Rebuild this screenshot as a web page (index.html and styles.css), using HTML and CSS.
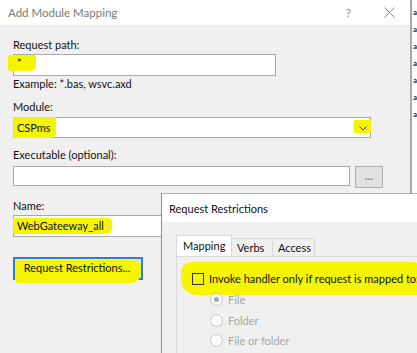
FILE: index.html
```html
<!DOCTYPE html>
<html lang="en">
<head>
  <meta charset="UTF-8">
  <meta name="viewport" content="width=device-width, initial-scale=1.0">
  <title>Add Module Mapping</title>
  <link rel="stylesheet" href="styles.css">
</head>
<body>

  <div class="screen">
    <div class="dialog main">
      <div class="titlebar">
        <span class="title">Add Module Mapping</span>
        <span class="help">?</span>
        <svg class="close" width="11" height="11" viewBox="0 0 11 11">
          <path d="M0.5 0.5 L10.5 10.5 M10.5 0.5 L0.5 10.5" stroke="#8a8a8a" stroke-width="1" fill="none"/>
        </svg>
      </div>

      <div class="form">
        <div class="label">Request path:</div>
        <div class="field path"><span class="mark mark-star">*</span></div>
        <div class="hint">Example: *.bas, wsvc.axd</div>

        <div class="label gap-module">Module:</div>
        <div class="field select">
          <span class="mark mark-module">CSPms</span>
          <span class="mark mark-chevron">
            <svg width="8" height="5" viewBox="0 0 8 5">
              <path d="M0.5 0.5 L4 4 L7.5 0.5" stroke="#444" stroke-width="1" fill="none"/>
            </svg>
          </span>
        </div>

        <div class="label gap-exec">Executable (optional):</div>
        <div class="exec-row">
          <div class="field exec"></div>
          <div class="btn browse">...</div>
        </div>

        <div class="label gap-name">Name:</div>
        <div class="field name"><span class="mark mark-name">WebGateeway_all</span></div>

        <div class="btn restrictions"><span class="mark mark-btn">Request Restrictions...</span></div>
      </div>
    </div>

    <div class="backdrop">
      <span>a</span><span>a</span><span>a</span><span>a</span><span>a</span><span>a</span><span>a</span>
    </div>

    <div class="dialog sub">
      <div class="titlebar sub-title">Request Restrictions</div>
      <div class="sub-body">
        <div class="tabs">
          <div class="tab active">Mapping</div>
          <div class="tab">Verbs</div>
          <div class="tab">Access</div>
        </div>
        <div class="panel">
          <div class="mark invoke">
            <span class="checkbox"></span>
            <span class="invoke-text">Invoke handler only if request is mapped to:</span>
          </div>
          <div class="radios">
            <div class="radio checked"><span class="dot"></span>File</div>
            <div class="radio"><span class="dot"></span>Folder</div>
            <div class="radio"><span class="dot"></span>File or folder</div>
          </div>
        </div>
      </div>
    </div>
  </div>

</body>
</html>
```

FILE: styles.css
```css
* {
  margin: 0;
  padding: 0;
  box-sizing: border-box;
  font-family: Lato, "Noto Sans", sans-serif;
}

body {
  width: 417px;
  height: 353px;
  overflow: hidden;
  background: #fff;
}

.screen {
  display: flex;
  height: 353px;
  position: relative;
  overflow: hidden;
}

.mark {
  background: #f5f500;
  border-radius: 3px;
}

/* main dialog */

.main {
  width: 412px;
  flex-shrink: 0;
  background: #f0f0f0;
  border-right: 2px solid #a9a9a9;
}

.titlebar {
  height: 25px;
  background: #fff;
  display: flex;
  align-items: center;
  padding-left: 8px;
  font-size: 11.5px;
  color: #7a7a7a;
}

.help {
  margin-left: auto;
  margin-right: 33px;
  font-size: 12px;
  color: #8a8a8a;
}

.close {
  margin-right: 15px;
}

.form {
  padding: 12px 0 0 13px;
  font-size: 11px;
  color: #111;
}

.label {
  line-height: 16px;
}

.gap-module { margin-top: 8px; }
.gap-exec { margin-top: 9px; }
.gap-name { margin-top: 10px; }

.field {
  height: 22px;
  background: #fff;
  border: 1px solid #a8a8a8;
  display: flex;
  align-items: center;
  padding-left: 3px;
}

.path {
  width: 263px;
  margin-top: 1px;
  align-items: flex-start;
}

.mark-star {
  display: inline-block;
  line-height: 16px;
  margin-left: -9px;
  padding: 0 14px 0 9px;
  border-radius: 2px 2px 6px 2px;
}

.hint {
  line-height: 15px;
}

.select {
  width: 358px;
  height: 21px;
  margin-top: 2px;
}

.mark-module {
  align-self: stretch;
  display: flex;
  align-items: center;
  margin: -1px 0 -1px -4px;
  padding: 0 5px 0 4px;
  border-radius: 2px 2px 5px 2px;
}

.mark-chevron {
  margin-left: auto;
  margin-right: -1px;
  align-self: flex-start;
  margin-top: 2px;
  width: 17px;
  height: 13px;
  display: flex;
  align-items: center;
  justify-content: center;
  padding-top: 4px;
  border-radius: 1px;
}

.exec-row {
  display: flex;
  gap: 5px;
  margin-top: 3px;
}

.exec {
  width: 337px;
  height: 20px;
}

.btn {
  background: #e1e1e1;
  border: 1px solid #adadad;
  display: flex;
  justify-content: center;
}

.browse {
  width: 28px;
  height: 22px;
  font-size: 11px;
  line-height: 18px;
  color: #555;
}

.name {
  width: 337px;
  margin-top: 1px;
}

.mark-name {
  line-height: 16px;
  margin-left: -4px;
  padding: 0 8px 0 4px;
  border-radius: 2px 4px 6px 2px;
}

.restrictions {
  width: 130px;
  height: 23px;
  margin-top: 20px;
  border: 2px solid #2b7fd9;
  align-items: flex-start;
  white-space: nowrap;
}

.mark-btn {
  display: inline-block;
  line-height: 16px;
  margin-top: 1px;
  padding: 0 11px 7px 9px;
  border-radius: 4px 8px 10px 3px;
}

/* background window peeking at the right */

.backdrop {
  flex-grow: 1;
  display: flex;
  flex-direction: column;
  padding: 4px 0 0 1px;
  font-size: 8px;
  line-height: 17px;
  font-weight: bold;
  color: #2a2a2a;
}

/* request restrictions dialog */

.sub {
  position: absolute;
  left: 161px;
  top: 193px;
  width: 256px;
  height: 160px;
  background: #f0f0f0;
  border-left: 1px solid #8c8c8c;
  border-top: 1px solid #b4b4b4;
  overflow: hidden;
}

.sub-title {
  height: 28px;
  padding-left: 7px;
  color: #111;
  font-size: 11px;
}

.sub-body {
  padding: 13px 0 0 14px;
  font-size: 11px;
}

.tabs {
  display: flex;
  align-items: flex-end;
  height: 21px;
}

.tab {
  height: 18px;
  line-height: 17px;
  padding: 0 5px;
  border: 1px solid #d9d9d9;
  border-bottom: none;
  background: #f0f0f0;
  color: #111;
}

.tab.active {
  height: 21px;
  line-height: 19px;
  width: 56px;
  background: #fff;
  padding: 0 6px;
}

.tab + .tab {
  margin-left: -1px;
}

.tab:nth-child(2) { width: 42px; }
.tab:nth-child(3) { width: 43px; }

.panel {
  border-top: 1px solid #d9d9d9;
  border-left: 1px solid #d9d9d9;
  height: 120px;
  padding-top: 5px;
}

.invoke {
  display: flex;
  align-items: center;
  gap: 5px;
  height: 33px;
  margin-left: 4px;
  padding-left: 11px;
  white-space: nowrap;
  border-radius: 10px 2px 0 16px;
  color: #111;
}

.checkbox {
  width: 12px;
  height: 12px;
  border: 1px solid #333;
  flex-shrink: 0;
}

.radios {
  margin-top: -6px;
  padding-left: 33px;
  color: #a6a6a6;
}

.radio {
  display: flex;
  align-items: center;
  gap: 5px;
  height: 20px;
}

.radio:first-child {
  height: 21px;
}

.radio .dot {
  width: 13px;
  height: 13px;
  border-radius: 50%;
  border: 1px solid #c4c4c4;
  background: #fbfbfb;
  display: flex;
  align-items: center;
  justify-content: center;
}

.radio.checked .dot::after {
  content: "";
  width: 5px;
  height: 5px;
  border-radius: 50%;
  background: #a8a8a8;
}
```
